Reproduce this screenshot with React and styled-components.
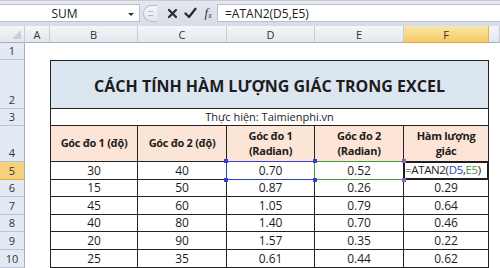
import styled, { createGlobalStyle } from 'styled-components'

const GlobalStyle = createGlobalStyle`
  html, body {
    margin: 0;
    padding: 0;
    background: #fff;
    overflow: hidden;
  }
  body {
    font-family: 'Open Sans', 'Noto Sans', sans-serif;
  }
`

const Window = styled.div`
  width: 500px;
  height: 268px;
  overflow: hidden;
  background: #fff;
  display: flex;
  flex-direction: column;
`

const Toolbar = styled.div`
  display: flex;
  height: 26px;
  box-sizing: border-box;
  padding: 3px 0 4px;
  background: linear-gradient(#e4e8ee, #d7dde6);
  border-top: 1px solid #c4cbd5;
`

const NameBox = styled.div`
  position: relative;
  width: 140px;
  box-sizing: border-box;
  background: #fff;
  border: 1px solid #b6c0cc;
  border-left: none;
  display: flex;
  align-items: center;
  justify-content: center;
  font-size: 12px;
  color: #222;
  padding-right: 10px;
`

const DropArrow = styled.span`
  position: absolute;
  right: 5px;
  top: 8px;
  width: 0;
  height: 0;
  border-left: 3px solid transparent;
  border-right: 3px solid transparent;
  border-top: 3px solid #333;
`

const Controls = styled.div`
  width: 77px;
  display: flex;
  align-items: center;
  padding-left: 3px;
  box-sizing: border-box;
`

const Grip = styled.div`
  width: 14px;
  height: 17px;
  box-sizing: border-box;
  border: 1px solid #b7bfca;
  border-right: none;
  border-radius: 9px 0 0 9px;
  background: linear-gradient(#f4f6f9, #e2e6ec);
  display: flex;
  align-items: center;
  justify-content: center;
  margin-right: 7px;

  &::after {
    content: '';
    width: 5px;
    height: 3px;
    border-top: 1px solid #b0b8c3;
    border-bottom: 1px solid #b0b8c3;
  }
`

const IconBtn = styled.span`
  width: 18px;
  display: flex;
  align-items: center;
  justify-content: center;
`

const Fx = styled.span`
  font-family: 'Liberation Serif', serif;
  font-style: italic;
  font-size: 13px;
  color: #333;
  width: 18px;
  text-align: center;

  sub {
    font-size: 8px;
    vertical-align: -1px;
  }
`

const FormulaInput = styled.div`
  flex: 1;
  background: #fff;
  border: 1px solid #b6c0cc;
  border-right: none;
  display: flex;
  align-items: center;
  padding-left: 7px;
  font-size: 12px;
  color: #222;
`

const Sheet = styled.div`
  display: grid;
  grid-template-columns: 25px 25px 88px 89px 88px 89px 85px 11px;
  grid-template-rows: 17px 17px 49px 17px 36px 18px 17px 18px 17px 18px 18px;
`

const Corner = styled.div`
  background: linear-gradient(#f3f5f8, #e2e6ec);
  border-right: 1px solid #c5cbd4;
  border-bottom: 1px solid #9eb0c6;
  box-sizing: border-box;
  display: flex;
  align-items: flex-end;
  justify-content: flex-end;
  padding: 0 3px 3px 0;

  &::after {
    content: '';
    width: 0;
    height: 0;
    border-left: 9px solid transparent;
    border-bottom: 9px solid #c9ced6;
  }
`

const ColHead = styled.div`
  background: ${(p) => (p.$active ? 'linear-gradient(#fbe6ae, #f6ca63)' : 'linear-gradient(#f4f6f9, #e3e7ed)')};
  border-right: 1px solid ${(p) => (p.$active ? '#e8b34a' : '#c5cbd4')};
  border-bottom: 1px solid ${(p) => (p.$active ? '#e2a93c' : '#9eb0c6')};
  box-sizing: border-box;
  display: flex;
  align-items: center;
  justify-content: center;
  font-size: 11px;
  color: #333;
`

const RowHead = styled.div`
  background: ${(p) => (p.$active ? '#f6d27c' : '#e4eaf3')};
  border-right: 1px solid #9eb0c6;
  border-bottom: 1px solid ${(p) => (p.$active ? '#e2a93c' : '#b7c5d7')};
  box-sizing: border-box;
  display: flex;
  align-items: flex-end;
  justify-content: center;
  padding-bottom: 1px;
  font-size: 11px;
  color: #333;
`

const Blank = styled.div`
  background: #fff;
  grid-column: ${(p) => p.$span || 'auto'};
`

const Cell = styled.div`
  position: relative;
  box-sizing: border-box;
  grid-column: ${(p) => p.$span || 'auto'};
  background: ${(p) => p.$fill || '#fff'};
  border-right: 1px solid #222;
  border-bottom: 1px solid #222;
  border-left: ${(p) => (p.$first ? '1px solid #222' : 'none')};
  border-top: ${(p) => (p.$top ? '1px solid #222' : 'none')};
  display: flex;
  align-items: center;
  justify-content: ${(p) => p.$justify || 'center'};
  text-align: center;
  font-size: ${(p) => p.$size || '12px'};
  font-weight: ${(p) => (p.$bold ? 700 : 400)};
  letter-spacing: ${(p) => p.$track || 'normal'};
  line-height: 1.3;
  color: #1c1c1c;
  padding: 0 ${(p) => p.$pad || '2px'};
  white-space: nowrap;
`

const Title = styled(Cell)`
  font-size: 16px;
  font-weight: 700;
  padding-top: 3px;
`

const Mark = styled.span`
  position: absolute;
  z-index: 2;
  inset: -1px;
  border: 1px solid ${(p) => p.$color};
  pointer-events: none;
`

const Active = styled.span`
  position: absolute;
  z-index: 3;
  inset: -1px;
  border: 2px solid #1e1e1e;
  pointer-events: none;
`

const Handle = styled.span`
  position: absolute;
  z-index: 4;
  width: 4px;
  height: 4px;
  background: ${(p) => p.$color};
  ${(p) => (p.$right ? 'right: -3px;' : 'left: -3px;')}
  ${(p) => (p.$bottom ? 'bottom: -3px;' : 'top: -3px;')}
`

const Ref = styled.span`
  color: ${(p) => p.$color};
`

const cols = ['A', 'B', 'C', 'D', 'E', 'F']

const rows = [
  [30, 40, '0.70', '0.52', null],
  [15, 50, '0.87', '0.26', '0.29'],
  [45, 60, '1.05', '0.79', '0.64'],
  [40, 80, '1.40', '0.70', '0.46'],
  [20, 90, '1.57', '0.35', '0.22'],
  [25, 35, '0.61', '0.44', '0.62']
]

const headers = ['Góc đo 1 (độ)', 'Góc đo 2 (độ)', ['Góc đo 1', '(Radian)'], ['Góc đo 2', '(Radian)'], ['Hàm lượng', 'giác']]

const BLUE = '#3340c8'
const GREEN = '#3f9a3a'

function CrossIcon() {
  return (
    <svg width='11' height='11' viewBox='0 0 11 11'>
      <path d='M2 2 L9 9 M9 2 L2 9' stroke='#2b2b2b' strokeWidth='2.2' strokeLinecap='round' />
    </svg>
  )
}

function CheckIcon() {
  return (
    <svg width='13' height='12' viewBox='0 0 13 12'>
      <path d='M1.5 6.5 L5 10 L11.5 1.8' stroke='#2b2b2b' strokeWidth='2.3' fill='none' strokeLinecap='round' strokeLinejoin='round' />
    </svg>
  )
}

function FormulaBar() {
  return (
    <Toolbar>
      <NameBox>
        SUM
        <DropArrow />
      </NameBox>
      <Controls>
        <Grip />
        <IconBtn>
          <CrossIcon />
        </IconBtn>
        <IconBtn>
          <CheckIcon />
        </IconBtn>
        <Fx>
          f<sub>x</sub>
        </Fx>
      </Controls>
      <FormulaInput>=ATAN2(D5,E5)</FormulaInput>
    </Toolbar>
  )
}

function DataRow({ values, index }) {
  const rowNo = index + 5
  const isFirst = index === 0
  return (
    <>
      <RowHead $active={isFirst}>{rowNo}</RowHead>
      <Blank />
      <Cell $first>{values[0]}</Cell>
      <Cell>{values[1]}</Cell>
      <Cell>
        {values[2]}
        {isFirst && (
          <>
            <Mark $color={BLUE} />
            <Handle $color={BLUE} />
            <Handle $color={BLUE} $bottom />
            <Handle $color={BLUE} $right />
            <Handle $color={BLUE} $right $bottom />
          </>
        )}
      </Cell>
      <Cell>
        {values[3]}
        {isFirst && (
          <>
            <Mark $color={GREEN} />
            <Handle $color='#9a5fb0' $right />
            <Handle $color='#9a5fb0' $right $bottom />
          </>
        )}
      </Cell>
      {isFirst ? (
        <Cell $justify='flex-start' $size='11.5px' $track='-0.35px' $pad='1px'>
          =ATAN2(<Ref $color={BLUE}>D5</Ref>,<Ref $color={GREEN}>E5</Ref>)
          <Active />
        </Cell>
      ) : (
        <Cell>{values[4]}</Cell>
      )}
      <Blank />
    </>
  )
}

export default function App() {
  return (
    <Window>
      <GlobalStyle />
      <FormulaBar />
      <Sheet>
        <Corner />
        {cols.map((c) => (
          <ColHead key={c} $active={c === 'F'}>
            {c}
          </ColHead>
        ))}
        <ColHead />

        <RowHead>1</RowHead>
        <Blank />
        <Blank $span='span 6' />

        <RowHead>2</RowHead>
        <Blank />
        <Title $span='span 5' $fill='#dce6f1' $first $top>
          CÁCH TÍNH HÀM LƯỢNG GIÁC TRONG EXCEL
        </Title>
        <Blank />

        <RowHead>3</RowHead>
        <Blank />
        <Cell $span='span 5' $first $size='11px'>
          Thực hiện: Taimienphi.vn
        </Cell>
        <Blank />

        <RowHead>4</RowHead>
        <Blank />
        {headers.map((h, i) => (
          <Cell key={i} $fill='#fce4d6' $bold $first={i === 0} $size='11px' $track='-0.3px'>
            {Array.isArray(h) ? (
              <span>
                {h[0]}
                <br />
                {h[1]}
              </span>
            ) : (
              h
            )}
          </Cell>
        ))}
        <Blank />

        {rows.map((r, i) => (
          <DataRow key={i} values={r} index={i} />
        ))}
      </Sheet>
    </Window>
  )
}
